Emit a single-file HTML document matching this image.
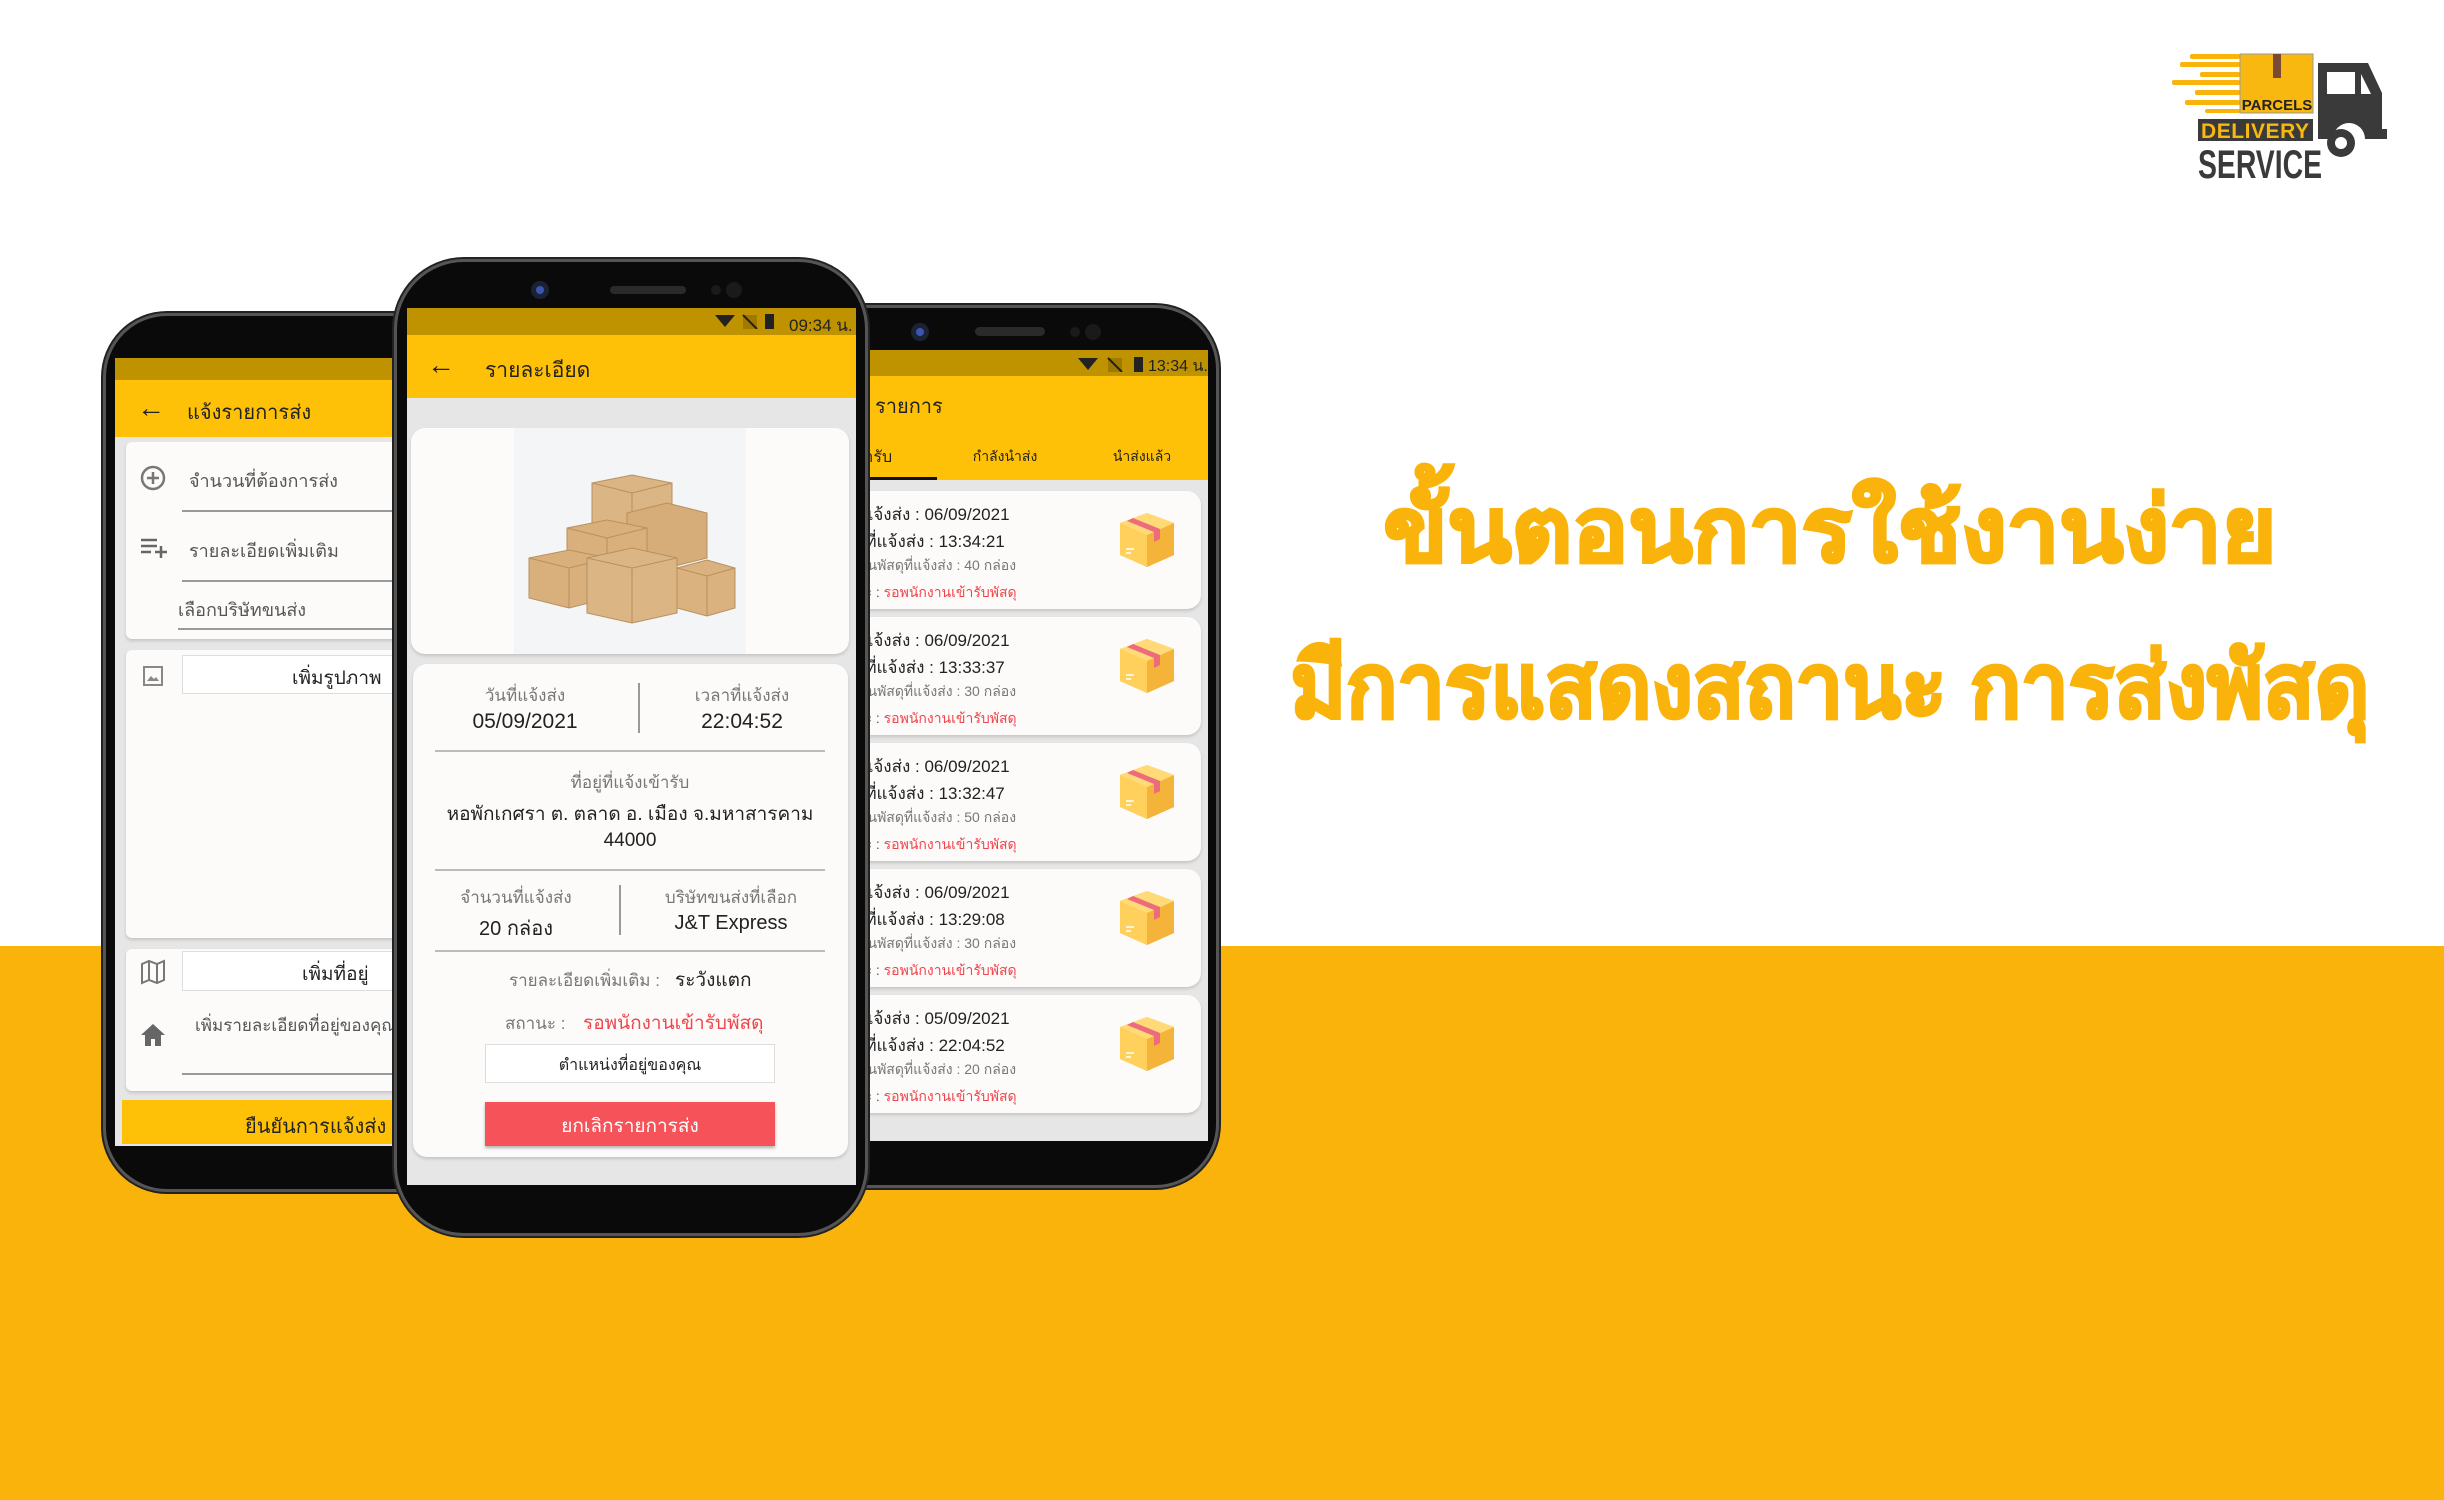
<!DOCTYPE html>
<html><head><meta charset="utf-8"><style>
*{margin:0;padding:0;box-sizing:border-box}
body{width:2444px;height:1500px;position:relative;overflow:hidden;background:#fff;font-family:"Liberation Sans","Noto Sans CJK SC",sans-serif;color:#222}
.a{position:absolute}
.band{left:0;top:946px;width:2444px;height:554px;background:#F9B30B}
.phone{position:absolute;background:#0a0a0a;border:3px solid #555;border-radius:64px;box-shadow:0 0 0 2px #222}
.scr{position:absolute;overflow:hidden;background:#e6e6e6}
.sb{position:absolute;left:0;right:0;background:#BF9200}
.ab{position:absolute;left:0;right:0;background:#FFC107}
.card{position:absolute;background:#fcfbf9;border-radius:14px;box-shadow:0 2px 3px rgba(0,0,0,.15)}
.t{position:absolute;white-space:nowrap}
.c{transform:translateX(-50%)}
.hl{position:absolute;height:2px;background:#bbb}
.h{font-weight:bold;color:#F9B30B;font-size:90px;white-space:nowrap;position:absolute;-webkit-text-stroke:3px #F9B30B}
</style></head><body>
<div class="a band"></div>

<!-- heading -->
<div class="h" style="left:1830px;top:458px;transform:translateX(-50%) scaleX(1.04)">ขั้นตอนการใช้งานง่าย</div>
<div class="h" style="left:1830px;top:614px;transform:translateX(-50%) scaleX(0.94)">มีการแสดงสถานะ การส่งพัสดุ</div>

<!-- logo -->
<svg class="a" style="left:2165px;top:45px" width="230" height="140" viewBox="2165 45 230 140">
<g fill="#F9B30B"><rect x="2190" y="54" width="50" height="5" rx="2"/><rect x="2180" y="62" width="60" height="5" rx="2"/><rect x="2200" y="72" width="40" height="5" rx="2"/><rect x="2172" y="80" width="68" height="5" rx="2"/><rect x="2195" y="90" width="45" height="5" rx="2"/><rect x="2185" y="100" width="55" height="5" rx="2"/><rect x="2205" y="109" width="35" height="4" rx="2"/></g>
<rect x="2240" y="54" width="73" height="59" fill="#F9B80F" stroke="#999" stroke-width="1"/>
<rect x="2273" y="54" width="8" height="24" fill="#7a4a32"/>
<text x="2277" y="110" font-size="15" font-weight="bold" fill="#222" text-anchor="middle" font-family="Liberation Sans">PARCELS</text>
<path d="M2318 63h50l14 30v36h5v10h-22a16 16 0 0 0-32 0h-15z" fill="#3a3a3a"/>
<rect x="2327" y="72" width="28" height="22" fill="#fff"/><path d="M2361 74l10 20h-10z" fill="#fff"/>
<circle cx="2341" cy="143" r="14" fill="#3a3a3a"/><circle cx="2341" cy="143" r="6" fill="#fff"/>
<rect x="2198" y="119" width="115" height="22" fill="#3a3a3a"/>
<text x="2255" y="138" font-size="21" font-weight="bold" fill="#F9B80F" text-anchor="middle" font-family="Liberation Sans" textLength="108">DELIVERY</text>
<text x="2198" y="178" font-size="40" font-weight="bold" fill="#3a3a3a" font-family="Liberation Sans" textLength="124" lengthAdjust="spacingAndGlyphs">SERVICE</text>
</svg>

<!-- LEFT PHONE -->
<div class="phone" style="left:103px;top:313px;width:360px;height:879px"></div>
<div class="scr" style="left:115px;top:358px;width:300px;height:788px">
 <div class="sb" style="top:0;height:22px"></div>
 <div class="ab" style="top:22px;height:57px"></div>
 <div class="t" style="left:22px;top:34px;font-size:28px">←</div>
 <div class="t" style="left:72px;top:38px;font-size:20px">แจ้งรายการส่ง</div>
 <div class="card" style="left:11px;top:84px;width:300px;height:197px;border-radius:6px"></div>
 <svg class="a" style="left:24px;top:106px" width="28" height="28"><circle cx="14" cy="14" r="11" fill="none" stroke="#777" stroke-width="2.5"/><path d="M14 8v12M8 14h12" stroke="#777" stroke-width="2.5"/></svg>
 <div class="t" style="left:74px;top:108px;font-size:18px;color:#555">จำนวนที่ต้องการส่ง</div>
 <div class="hl" style="left:67px;top:152px;width:240px;background:#999"></div>
 <svg class="a" style="left:24px;top:178px" width="30" height="24"><path d="M2 4h16M2 10h16M2 16h10M16 16h12M22 10v12" stroke="#666" stroke-width="2.5"/></svg>
 <div class="t" style="left:74px;top:178px;font-size:18px;color:#555">รายละเอียดเพิ่มเติม</div>
 <div class="hl" style="left:67px;top:222px;width:240px;background:#999"></div>
 <div class="t" style="left:63px;top:237px;font-size:18px;color:#555">เลือกบริษัทขนส่ง</div>
 <div class="hl" style="left:63px;top:270px;width:240px;background:#999"></div>
 <div class="card" style="left:11px;top:292px;width:300px;height:288px;border-radius:6px"></div>
 <svg class="a" style="left:26px;top:306px" width="24" height="24"><rect x="3" y="3" width="18" height="18" fill="none" stroke="#888" stroke-width="2"/><path d="M6 17l4-5 3 3 2-2 3 4z" fill="#888"/></svg>
 <div class="a" style="left:67px;top:297px;width:240px;height:39px;background:#fff;border:1px solid #ddd"></div>
 <div class="t" style="left:177px;top:305px;font-size:19px">เพิ่มรูปภาพ</div>
 <div class="card" style="left:11px;top:591px;width:300px;height:142px;border-radius:6px"></div>
 <svg class="a" style="left:24px;top:600px" width="28" height="28"><path d="M3 6l7-3 8 3 7-3v19l-7 3-8-3-7 3z M10 3v19M18 6v19" fill="none" stroke="#777" stroke-width="2"/></svg>
 <div class="a" style="left:67px;top:593px;width:240px;height:40px;background:#fff;border:1px solid #ddd"></div>
 <div class="t" style="left:187px;top:601px;font-size:19px">เพิ่มที่อยู่</div>
 <svg class="a" style="left:24px;top:664px" width="28" height="26"><path d="M14 2L2 13h4v11h6v-7h4v7h6V13h4z" fill="#666"/></svg>
 <div class="t" style="left:80px;top:654px;font-size:17px;color:#555">เพิ่มรายละเอียดที่อยู่ของคุณ</div>
 <div class="hl" style="left:67px;top:715px;width:240px;background:#999"></div>
 <div class="a" style="left:7px;top:742px;width:300px;height:44px;background:#FFC107"></div>
 <div class="t" style="left:130px;top:752px;font-size:20px">ยืนยันการแจ้งส่ง</div>
</div>

<!-- RIGHT PHONE -->
<div class="phone" style="left:800px;top:305px;width:419px;height:883px"></div>
<svg class="a" style="left:900px;top:312px" width="250" height="40"><circle cx="20" cy="20" r="9" fill="#1a2233"/><circle cx="20" cy="20" r="4" fill="#3b55b0"/><rect x="75" y="15" width="70" height="9" rx="4.5" fill="#2a2a2a"/><circle cx="175" cy="20" r="5" fill="#1a1a1a"/><circle cx="193" cy="20" r="8" fill="#1a1a1a"/></svg>
<div class="scr" style="left:820px;top:350px;width:388px;height:791px">
 <div class="sb" style="top:0;height:26px"></div>
 <svg class="a" style="left:258px;top:6px" width="80" height="16"><path d="M0 2h20l-10 12z" fill="#222"/><path d="M30 2h14v14H30z" fill="#a07a00"/><path d="M30 2l14 14" stroke="#222" stroke-width="2"/><rect x="56" y="1" width="9" height="15" fill="#222"/></svg>
 <div class="t" style="left:328px;top:4px;font-size:16px;color:#222">13:34 น.</div>
 <div class="ab" style="top:26px;height:104px"></div>
 <div class="t" style="left:55px;top:40px;font-size:20px">รายการ</div>
 <div class="t" style="left:28px;top:95px;font-size:16px">เข้ารับ</div>
 <div class="t c" style="left:185px;top:96px;font-size:14px">กำลังนำส่ง</div>
 <div class="t c" style="left:322px;top:96px;font-size:14px">นำส่งแล้ว</div>
 <div class="a" style="left:0;top:127px;width:117px;height:3px;background:#111"></div>
 <div id="rc"></div>
</div>

<!-- CENTER PHONE -->
<div class="phone" style="left:394px;top:259px;width:474px;height:977px;border-radius:70px"></div>
<svg class="a" style="left:510px;top:278px" width="250" height="30"><circle cx="30" cy="12" r="9" fill="#1a2233"/><circle cx="30" cy="12" r="4" fill="#3b55b0"/><rect x="100" y="8" width="76" height="8" rx="4" fill="#2a2a2a"/><circle cx="206" cy="12" r="5" fill="#1a1a1a"/><circle cx="224" cy="12" r="8" fill="#1a1a1a"/></svg>
<div class="scr" style="left:407px;top:308px;width:449px;height:877px">
 <div class="sb" style="top:0;height:27px"></div>
 <svg class="a" style="left:308px;top:5px" width="70" height="16"><path d="M0 2h20l-10 12z" fill="#222"/><path d="M28 2h14v14H28z" fill="#a07a00"/><path d="M28 2l14 14" stroke="#222" stroke-width="2"/><rect x="50" y="1" width="9" height="15" fill="#222"/></svg>
 <div class="t" style="left:382px;top:4px;font-size:17px;color:#222">09:34 น.</div>
 <div class="ab" style="top:27px;height:63px"></div>
 <div class="t" style="left:20px;top:41px;font-size:28px">←</div>
 <div class="t" style="left:78px;top:46px;font-size:21px">รายละเอียด</div>
 <div class="card" style="left:4px;top:120px;width:438px;height:226px"></div>
 <div class="a" style="left:107px;top:120px;width:232px;height:226px;background:#f4f5f7"></div>
 <svg class="a" style="left:120px;top:150px" width="210" height="180" viewBox="0 0 210 180">
  <g stroke="#b8905e" stroke-width="1">
  <path d="M65 25l40-8 40 8v40l-40 10-40-10z" fill="#dcb584"/><path d="M65 25l40 10 40-10M105 35v40" fill="none"/>
  <path d="M100 55l40-10 40 10v45l-40 10-40-10z" fill="#d6ac78"/>
  <path d="M40 70l40-8 40 8v40l-40 10-40-10z" fill="#d9b07c"/><path d="M40 70l40 10 40-10M80 80v40" fill="none"/>
  <path d="M2 100l40-8 40 8v40l-40 10-40-10z" fill="#d9b07c"/><path d="M2 100l40 10 40-10M42 110v40" fill="none"/>
  <path d="M60 100l45-10 45 10v55l-45 10-45-10z" fill="#dcb584"/><path d="M60 100l45 10 45-10M105 110v55" fill="none"/>
  <path d="M150 110l30-8 28 8v40l-28 8-30-8z" fill="#dab27f"/><path d="M150 110l30 8 28-8M180 118v40" fill="none"/>
  </g></svg>
 <div class="card" style="left:6px;top:356px;width:435px;height:493px"></div>
 <div class="t c" style="left:118px;top:374px;font-size:17px;color:#777">วันที่แจ้งส่ง</div>
 <div class="t c" style="left:118px;top:402px;font-size:21px">05/09/2021</div>
 <div class="a" style="left:231px;top:375px;width:2px;height:50px;background:#999"></div>
 <div class="t c" style="left:335px;top:374px;font-size:17px;color:#777">เวลาที่แจ้งส่ง</div>
 <div class="t c" style="left:335px;top:402px;font-size:21px">22:04:52</div>
 <div class="hl" style="left:28px;top:442px;width:390px"></div>
 <div class="t c" style="left:223px;top:461px;font-size:17px;color:#777">ที่อยู่ที่แจ้งเข้ารับ</div>
 <div class="t c" style="left:223px;top:491px;font-size:19px">หอพักเกศรา ต. ตลาด อ. เมือง จ.มหาสารคาม</div>
 <div class="t c" style="left:223px;top:522px;font-size:19px">44000</div>
 <div class="hl" style="left:28px;top:561px;width:390px"></div>
 <div class="t c" style="left:109px;top:576px;font-size:17px;color:#777">จำนวนที่แจ้งส่ง</div>
 <div class="t c" style="left:109px;top:604px;font-size:20px">20 กล่อง</div>
 <div class="a" style="left:212px;top:577px;width:2px;height:50px;background:#999"></div>
 <div class="t c" style="left:324px;top:576px;font-size:17px;color:#777">บริษัทขนส่งที่เลือก</div>
 <div class="t c" style="left:324px;top:604px;font-size:20px">J&amp;T Express</div>
 <div class="hl" style="left:28px;top:642px;width:390px"></div>
 <div class="t" style="left:102px;top:659px;font-size:17px;color:#777">รายละเอียดเพิ่มเติม :</div>
 <div class="t" style="left:268px;top:657px;font-size:19px">ระวังแตก</div>
 <div class="t" style="left:98px;top:702px;font-size:17px;color:#777">สถานะ :</div>
 <div class="t" style="left:176px;top:700px;font-size:19px;color:#F0454D">รอพนักงานเข้ารับพัสดุ</div>
 <div class="a" style="left:78px;top:736px;width:290px;height:39px;background:#fff;border:1px solid #ddd"></div>
 <div class="t c" style="left:223px;top:745px;font-size:16px">ตำแหน่งที่อยู่ของคุณ</div>
 <div class="a" style="left:78px;top:794px;width:290px;height:44px;background:#F5525A;box-shadow:0 2px 3px rgba(0,0,0,.3)"></div>
 <div class="t c" style="left:223px;top:803px;font-size:19px;color:#fff">ยกเลิกรายการส่ง</div>
</div>

<script>
var d=[["06/09/2021","13:34:21","40"],["06/09/2021","13:33:37","30"],["06/09/2021","13:32:47","50"],["06/09/2021","13:29:08","30"],["05/09/2021","22:04:52","20"]];
var h="";
d.forEach(function(r,i){var y=141+i*126;
h+='<div class="card" style="left:-20px;top:'+y+'px;width:401px;height:118px"></div>';
h+='<div class="t" style="left:10px;top:'+(y+10)+'px;font-size:17px">วันที่แจ้งส่ง : '+r[0]+'</div>';
h+='<div class="t" style="left:10px;top:'+(y+37)+'px;font-size:17px">เวลาที่แจ้งส่ง : '+r[1]+'</div>';
h+='<div class="t" style="left:14px;top:'+(y+64)+'px;font-size:14px;color:#777">จำนวนพัสดุที่แจ้งส่ง : '+r[2]+' กล่อง</div>';
h+='<div class="t" style="left:10px;top:'+(y+91)+'px;font-size:14px;color:#555">สถานะ : <span style="color:#F0454D">รอพนักงานเข้ารับพัสดุ</span></div>';
h+='<svg class="a" style="left:298px;top:'+(y+20)+'px" width="58" height="58" viewBox="0 0 58 58"><path d="M29 2l27 10v32L29 56 2 44V12z" fill="#FDC44E"/><path d="M2 12l27 12v32L2 44z" fill="#FFD15C"/><path d="M29 24l27-12v32L29 56z" fill="#F4B43A"/><path d="M2 12L29 2l27 10-27 12z" fill="#FFDA76"/><path d="M15 7l27 11v10l-6 3V21L9 10z" fill="#EC6C7C"/><path d="M8 38h8M8 42h5" stroke="#fff" stroke-width="1.5"/></svg>';});
document.getElementById("rc").innerHTML=h;
</script>
</body></html>
